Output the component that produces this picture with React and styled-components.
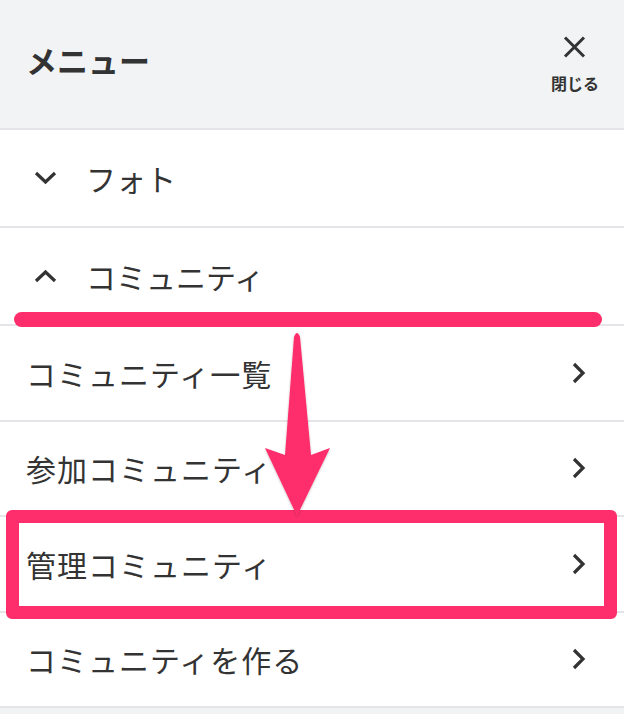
import React from "react";
import styled, { createGlobalStyle } from "styled-components";

const GlobalStyle = createGlobalStyle`
  html, body {
    margin: 0;
    padding: 0;
    background: #f2f3f5;
  }
  body {
    font-family: "Noto Sans CJK JP", "Noto Sans", sans-serif;
    color: #333;
  }
  * { box-sizing: border-box; }
`;

const Page = styled.div`
  position: relative;
  width: 624px;
  min-height: 714px;
  background: #f2f3f5;
`;

const Header = styled.header`
  height: 130px;
  display: flex;
  align-items: flex-start;
  justify-content: space-between;
  padding: 0 25px 0 26px;
  background: #f2f3f5;
  border-bottom: 2px solid #e4e4e9;
`;

const Title = styled.h1`
  margin: 44px 0 0;
  font-size: 31px;
  line-height: 1;
  font-weight: 700;
  color: #333;
`;

const CloseButton = styled.button`
  display: flex;
  flex-direction: column;
  align-items: center;
  gap: 17px;
  background: none;
  border: none;
  padding: 0;
  margin-top: 36px;
  font-family: inherit;
  color: #333;
  cursor: pointer;
`;

const CloseLabel = styled.span`
  font-size: 16px;
  font-weight: 700;
  line-height: 1;
`;

const List = styled.div`
  background: #fff;
`;

const Row = styled.div`
  display: flex;
  align-items: center;
  height: ${(p) => p.$h}px;
  padding: ${(p) => (p.$sub ? "0 38px 0 26px" : "0 26px 0 34px")};
  border-bottom: 2px solid #e4e4e9;
  background: #fff;
`;

const Label = styled.span`
  flex: 1;
  font-size: 30px;
  font-weight: 400;
  color: #333;
  line-height: 1;
  letter-spacing: ${(p) => (p.$sub ? "1px" : "0")};
`;

const Toggle = styled.span`
  display: flex;
  width: 23px;
  margin-right: 29px;
  justify-content: center;
`;

const Overlay = styled.div`
  position: absolute;
  inset: 0;
  pointer-events: none;
`;

const Underline = styled.div`
  position: absolute;
  left: 14px;
  top: 312px;
  width: 588px;
  height: 15px;
  border-radius: 8px;
  background: #fe2e6c;
`;

const Highlight = styled.div`
  position: absolute;
  left: 6px;
  top: 510px;
  width: 611px;
  height: 109px;
  border: 13px solid #fe2e6c;
  border-radius: 6px;
`;

const ArrowSvg = styled.svg`
  position: absolute;
  left: 0;
  top: 0;
  overflow: visible;
`;

const XIcon = () => (
  <svg width="23" height="22" viewBox="0 0 23 22">
    <path d="M2 1.5 L21 20.5 M21 1.5 L2 20.5" stroke="#333" strokeWidth="3" fill="none" />
  </svg>
);

const ChevronDown = () => (
  <svg width="23" height="14" viewBox="0 0 23 14">
    <polyline points="2,2 11.5,11 21,2" stroke="#333" strokeWidth="3.2" fill="none" strokeLinejoin="miter" />
  </svg>
);

const ChevronUp = () => (
  <svg width="23" height="14" viewBox="0 0 23 14">
    <polyline points="2,12 11.5,3 21,12" stroke="#333" strokeWidth="3.2" fill="none" strokeLinejoin="miter" />
  </svg>
);

const ChevronRight = () => (
  <svg width="14" height="22" viewBox="0 0 14 22">
    <polyline points="2,2 11,11 2,20" stroke="#333" strokeWidth="3.2" fill="none" strokeLinejoin="miter" />
  </svg>
);

const subItems = ["コミュニティ一覧", "参加コミュニティ", "管理コミュニティ", "コミュニティを作る"];

export default function App() {
  return (
    <Page>
      <GlobalStyle />
      <Header>
        <Title>メニュー</Title>
        <CloseButton aria-label="閉じる">
          <XIcon />
          <CloseLabel>閉じる</CloseLabel>
        </CloseButton>
      </Header>
      <List>
        <Row $h={98}>
          <Toggle>
            <ChevronDown />
          </Toggle>
          <Label>フォト</Label>
        </Row>
        <Row $h={98}>
          <Toggle>
            <ChevronUp />
          </Toggle>
          <Label>コミュニティ</Label>
        </Row>
        {subItems.map((t) => (
          <Row key={t} $h={95.5} $sub>
            <Label $sub>{t}</Label>
            <ChevronRight />
          </Row>
        ))}
      </List>
      <Overlay>
        <Underline />
        <Highlight />
        <ArrowSvg width="624" height="714" viewBox="0 0 624 714">
          <defs>
            <filter id="sh" x="-20%" y="-20%" width="140%" height="140%">
              <feDropShadow dx="0" dy="1" stdDeviation="1.2" floodColor="#000" floodOpacity="0.25" />
            </filter>
          </defs>
          <path
            d="M294 337 Q297 329 300 337 L311 455 L330 448 L297 516 L265 448 L285 455 Z"
            fill="#fe2e6c"
            filter="url(#sh)"
          />
        </ArrowSvg>
      </Overlay>
    </Page>
  );
}
